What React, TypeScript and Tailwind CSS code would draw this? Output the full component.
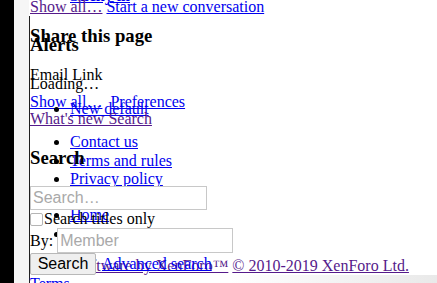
import React from "react";

const serif = "font-['Liberation_Serif',serif]";
const sans = "font-['Liberation_Sans',sans-serif]";

export default function App() {
  return (
    <div className={`relative w-[437px] h-[283px] overflow-hidden bg-white text-[16px] leading-[18px] text-black ${serif}`}>
      {/* left strips */}
      <div className="absolute left-0 top-0 h-full w-[14px] bg-black" />
      <div className="absolute left-[14px] top-0 h-full w-[15px] bg-[#f6f6f6]" />
      <div className="absolute left-[29px] top-[16px] bottom-0 w-px bg-[#222]" />
      {/* bottom right shade */}
      <div className="absolute left-[230px] right-0 top-[275px] bottom-0 bg-gradient-to-r from-white to-[#e9e9e9]" />

      {/* clipped top link */}
      <a href="#" className="absolute left-[70px] top-[-13px] font-bold text-[#0000ee] underline">Sticky in</a>

      <div className="absolute left-[30px] top-[-2px] whitespace-nowrap">
        <a href="#" className="text-[#551a8b] underline">Show all…</a>{" "}
        <a href="#" className="text-[#0000ee] underline">Start a new conversation</a>
      </div>

      <h3 className="absolute left-[30px] top-[25px] text-[18.72px] leading-[22px] font-bold whitespace-nowrap">Share this page</h3>
      <h3 className="absolute left-[30px] top-[34px] text-[18.72px] leading-[22px] font-bold">Alerts</h3>

      <div className="absolute left-[30px] top-[66px] whitespace-nowrap">Email Link</div>
      <div className="absolute left-[30px] top-[75px] whitespace-nowrap">Loading…</div>

      <div className="absolute left-[30px] top-[93px] flex gap-[8px] whitespace-nowrap">
        <a href="#" className="text-[#0000ee] underline">Show all…</a>
        <a href="#" className="text-[#0000ee] underline">Preferences</a>
      </div>

      <ul className="absolute left-[30px] top-[100px] list-disc pl-[40px]">
        <li><a href="#" className="text-[#0000ee] underline whitespace-nowrap">New default</a></li>
      </ul>

      <div className="absolute left-[30px] top-[110px] whitespace-nowrap">
        <a href="#" className="text-[#551a8b] underline">What's new Search</a>
      </div>

      <ul className="absolute left-[30px] top-[133px] list-disc pl-[40px] leading-[18.5px]">
        <li><a href="#" className="text-[#0000ee] underline whitespace-nowrap">Contact us</a></li>
        <li><a href="#" className="text-[#0000ee] underline whitespace-nowrap">Terms and rules</a></li>
        <li><a href="#" className="text-[#0000ee] underline whitespace-nowrap">Privacy policy</a></li>
      </ul>

      <h3 className="absolute left-[30px] top-[147px] text-[18.72px] leading-[22px] font-bold">Search</h3>

      <ul className="absolute left-[30px] top-[206px] list-disc pl-[40px] leading-[18.5px]">
        <li><a href="#" className="text-[#0000ee] underline">Home</a></li>
        <li><a href="#" className="text-[#0000ee] underline">RSS</a></li>
      </ul>

      {/* footer (lies under the search form) */}
      <div className="absolute left-[30px] top-[257px] whitespace-nowrap text-[#551a8b]">
        <a href="#" className="underline">Forum software by XenForo™</a>{" "}
        <a href="#" className="underline">© 2010-2019 XenForo Ltd.</a>
      </div>
      <a href="#" className="absolute left-[102px] top-[255px] whitespace-nowrap text-[#0000ee] underline">Advanced search</a>
      <a href="#" className="absolute left-[30px] top-[275px] text-[#0000ee] underline">Terms</a>

      {/* search form */}
      <form className="absolute left-[30px] top-[186px] flex flex-col items-start">
        <input
          placeholder="Search…"
          className={`w-[177px] h-[24px] border border-[#c8c8c8] bg-white px-[2px] text-[16px] ${sans} placeholder:text-[#a9a9a9] outline-none`}
        />
        <label className="flex items-center h-[18px] whitespace-nowrap">
          <span className="w-[13px] h-[13px] border border-[#b5b5b5] rounded-[2px] bg-white" />
          <span className="ml-[1px]">Search titles only</span>
        </label>
        <div className="flex items-center gap-[4px] h-[25px]">
          <span>By:</span>
          <input
            placeholder="Member"
            className={`w-[176px] h-[25px] border border-[#c8c8c8] bg-white px-[2px] text-[16px] ${sans} placeholder:text-[#a9a9a9] outline-none`}
          />
        </div>
        <button
          type="button"
          className={`w-[66px] h-[22px] rounded-[2px] border border-[#b8b8b8] bg-[#efefef] text-[16px] leading-[20px] ${sans} text-black`}
        >
          Search
        </button>
      </form>
    </div>
  );
}
